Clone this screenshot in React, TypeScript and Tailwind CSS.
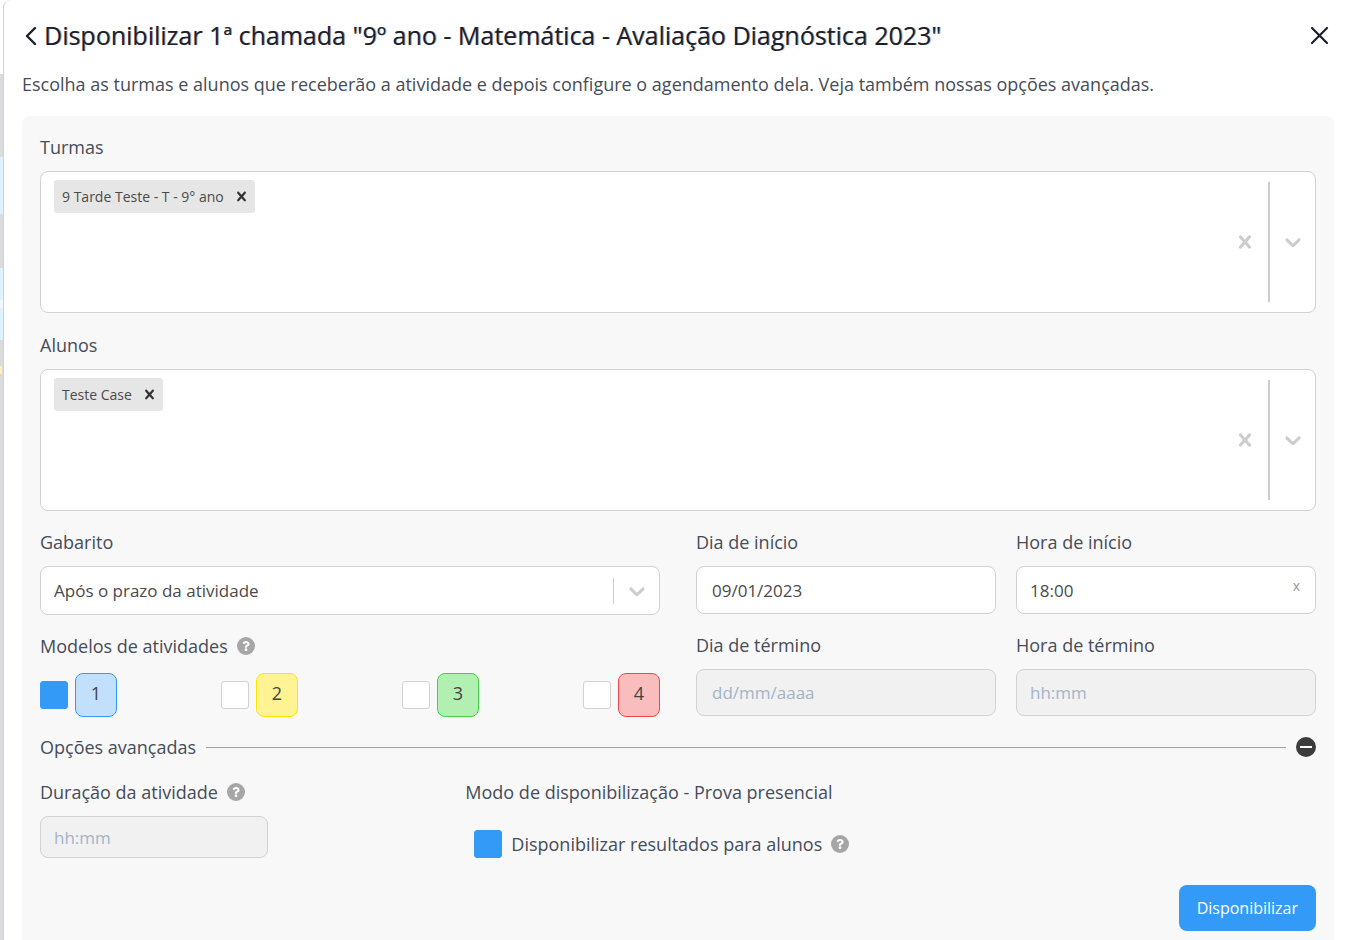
import type { ReactNode } from 'react'
import { FaQuestion } from 'react-icons/fa'

const MODELOS = [
  { id: '1', checked: true, style: 'border-[#339af7] bg-[#c2e0fb]' },
  { id: '2', checked: false, style: 'border-[#ffe500] bg-[#fff394]' },
  { id: '3', checked: false, style: 'border-[#47cf47] bg-[#b2f0b2]' },
  { id: '4', checked: false, style: 'border-[#ec4a4a] bg-[#fabdbd]' },
]

const CROSS =
  'M14.348 14.849c-0.469 0.469-1.229 0.469-1.697 0l-2.651-3.030-2.651 3.029c-0.469 0.469-1.229 0.469-1.697 0-0.469-0.469-0.469-1.229 0-1.697l2.758-3.15-2.759-3.152c-0.469-0.469-0.469-1.228 0-1.697s1.228-0.469 1.697 0l2.652 3.031 2.651-3.031c0.469-0.469 1.228-0.469 1.697 0s0.469 1.229 0 1.697l-2.758 3.152 2.758 3.15c0.469 0.469 0.469 1.229 0 1.698z'
const CHEVRON =
  'M4.516 7.548c0.436-0.446 1.043-0.481 1.576 0l3.908 3.747 3.908-3.747c0.533-0.481 1.141-0.446 1.574 0 0.436 0.445 0.408 1.197 0 1.615-0.406 0.418-4.695 4.502-4.695 4.502-0.217 0.223-0.502 0.335-0.787 0.335s-0.57-0.112-0.789-0.335c0 0-4.287-4.084-4.695-4.502s-0.436-1.17 0-1.615z'

function Glyph({ d, className }: { d: string; className: string }) {
  return (
    <svg viewBox="0 0 20 20" className={className} fill="currentColor">
      <path d={d} />
    </svg>
  )
}

function Help() {
  return (
    <button
      type="button"
      aria-label="Ajuda"
      className="flex size-[18px] shrink-0 items-center justify-center rounded-full bg-[#a6a6a6] text-white"
    >
      <FaQuestion size={10} />
    </button>
  )
}

function Checkbox({ id, checked }: { id: string; checked: boolean }) {
  return (
    <input
      id={id}
      type="checkbox"
      defaultChecked={checked}
      className="size-7 shrink-0 appearance-none rounded-[3px] border border-[#d2d2d2] bg-white checked:border-[#339af7] checked:bg-[#339af7]"
    />
  )
}

function MultiSelect({
  id,
  label,
  value,
}: {
  id: string
  label: string
  value: string
}) {
  return (
    <div>
      <label htmlFor={id} className="block">
        {label}
      </label>
      <div className="mt-[10px] flex h-[142px] rounded-lg border border-[#d2d2d2] bg-white">
        <div className="flex min-w-0 flex-1 items-start pt-2 pl-[13px]">
          <div className="flex h-[33px] items-center rounded-[3px] bg-[#e6e6e6] pr-1 pl-2 text-sm text-[#4a4a4a]">
            {value}
            <button
              type="button"
              aria-label={`Remover ${value}`}
              className="ml-2 text-[#333]"
            >
              <Glyph d={CROSS} className="size-[19px]" />
            </button>
          </div>
          <input id={id} className="h-[33px] min-w-0 flex-1 px-2 outline-none" />
        </div>
        <div className="flex items-center text-[#ccc]">
          <button type="button" aria-label={`Limpar ${label}`} className="px-[10px]">
            <Glyph d={CROSS} className="size-[26px]" />
          </button>
          <span className="h-[120px] w-[2px] bg-[#ccc]" />
          <button type="button" aria-label={`Abrir ${label}`} className="pr-[9px] pl-[10px]">
            <Glyph d={CHEVRON} className="size-[26px]" />
          </button>
        </div>
      </div>
    </div>
  )
}

type TextFieldProps = {
  id: string
  label: string
  value?: string
  placeholder?: string
  disabled?: boolean
  className: string
  children?: ReactNode
}

function TextField({
  id,
  label,
  value,
  placeholder,
  disabled,
  className,
  children,
}: TextFieldProps) {
  return (
    <div>
      <label htmlFor={id} className="block">
        {label}
      </label>
      <div className="relative mt-[10px]">
        <input
          id={id}
          type="text"
          defaultValue={value}
          placeholder={placeholder}
          disabled={disabled}
          className={`block h-12 w-full rounded-lg border border-[#d2d2d2] bg-white text-[17px] text-[#4a4a4a] placeholder:text-[#a3b4c8] disabled:h-[47px] disabled:bg-[#f1f1f1] ${className}`}
        />
        {children}
      </div>
    </div>
  )
}

export default function App() {
  return (
    <div className="flex min-h-screen bg-white font-['Open_Sans',sans-serif] text-lg leading-7 text-[#464c58]">
      {/* slice of the page left visible behind the dialog */}
      <div className="flex w-[3px] shrink-0 flex-col overflow-hidden bg-[#dadbdc]">
        <div className="h-[74px] bg-white" />
        <div className="mt-[83px] h-[57px] bg-[#def1ff]" />
        <div className="mt-[54px] flex h-[72px] items-center bg-[#def1ff]">
          <span className="h-2 w-[3px] bg-white/60" />
        </div>
        <div className="mt-[26px] h-2 w-[2px] self-start bg-[#fdeebb]" />
      </div>

      <main
        role="dialog"
        aria-labelledby="title"
        className="flex min-w-0 flex-1 flex-col rounded-tl-lg border-l border-[#d2d2d2] bg-white pr-4 pl-[18px]"
      >
        <header className="flex items-center pt-[15px] text-[#1a202c]">
          <button type="button" aria-label="Voltar" className="mr-[6px] ml-[2px]">
            <svg
              width="14"
              height="20"
              viewBox="0 0 14 20"
              fill="none"
              stroke="currentColor"
              strokeWidth="2.4"
              strokeLinecap="round"
              strokeLinejoin="round"
            >
              <path d="M11 3 3 11l8 8" />
            </svg>
          </button>
          <h1
            id="title"
            className="flex-1 text-[25px] leading-10 font-medium [text-shadow:1px_0_rgba(26,32,44,0.4)]"
          >
            Disponibilizar 1ª chamada "9º ano - Matemática - Avaliação
            Diagnóstica 2023"
          </h1>
          <button type="button" aria-label="Fechar" className="mr-[5px]">
            <svg
              width="19"
              height="19"
              viewBox="0 0 19 19"
              fill="none"
              stroke="currentColor"
              strokeWidth="2.2"
              strokeLinecap="round"
            >
              <path d="M2 2l15 15M17 2 2 17" />
            </svg>
          </button>
        </header>
        <p className="mt-[15px]">
          Escolha as turmas e alunos que receberão a atividade e depois
          configure o agendamento dela. Veja também nossas opções avançadas.
        </p>

        <form className="mt-[18px] flex-1 rounded-t-lg bg-[#f8f8f8] px-[18px] pt-[17px] pb-[9px]">
          <MultiSelect id="turmas" label="Turmas" value="9 Tarde Teste - T - 9° ano" />
          <div className="mt-[18px]">
            <MultiSelect id="alunos" label="Alunos" value="Teste Case" />
          </div>

          <div className="mt-[17px] grid grid-cols-2 gap-x-9">
            <div>
              <label htmlFor="gabarito" className="block">
                Gabarito
              </label>
              <div className="relative mt-[10px]">
                <select
                  id="gabarito"
                  className="block h-[49px] w-full appearance-none rounded-lg border border-[#d2d2d2] bg-white pr-14 pl-[13px] text-[17px] text-[#4a4a4a]"
                >
                  <option>Após o prazo da atividade</option>
                </select>
                <div className="pointer-events-none absolute inset-y-0 right-0 flex items-center pr-[10px] text-[#ccc]">
                  <span className="mr-[10px] h-[26px] w-px bg-[#ccc]" />
                  <Glyph d={CHEVRON} className="size-[26px]" />
                </div>
              </div>
              <fieldset className="mt-[17px]">
                <legend className="flex items-center gap-[9px]">
                  Modelos de atividades
                  <Help />
                </legend>
                <div className="mt-[13px] flex justify-between">
                  {MODELOS.map((modelo) => (
                    <div key={modelo.id} className="flex items-center gap-[7px]">
                      <Checkbox id={`modelo-${modelo.id}`} checked={modelo.checked} />
                      <label
                        htmlFor={`modelo-${modelo.id}`}
                        className={`flex h-11 w-[42px] items-center justify-center rounded-lg border pb-1 text-[#444] ${modelo.style}`}
                      >
                        {modelo.id}
                      </label>
                    </div>
                  ))}
                </div>
              </fieldset>
            </div>

            <div className="grid grid-cols-2 content-start gap-x-5 gap-y-[17px]">
              <TextField
                id="dia-inicio"
                label="Dia de início"
                value="09/01/2023"
                className="px-[15px]"
              />
              <TextField
                id="hora-inicio"
                label="Hora de início"
                value="18:00"
                className="px-[13px]"
              >
                <button
                  type="button"
                  aria-label="Limpar hora"
                  className="absolute top-2 right-4 text-sm leading-6 text-[#999]"
                >
                  x
                </button>
              </TextField>
              <TextField
                id="dia-termino"
                label="Dia de término"
                placeholder="dd/mm/aaaa"
                disabled
                className="px-[15px]"
              />
              <TextField
                id="hora-termino"
                label="Hora de término"
                placeholder="hh:mm"
                disabled
                className="px-[13px]"
              />
            </div>
          </div>

          <div className="mt-4 flex items-center gap-[10px]">
            <h2>Opções avançadas</h2>
            <span className="h-px flex-1 bg-[#a0a0a0]" />
            <button
              type="button"
              aria-label="Recolher opções avançadas"
              className="flex size-5 items-center justify-center rounded-full bg-[#3c3c3c]"
            >
              <span className="h-[2px] w-3 bg-white" />
            </button>
          </div>

          <div className="mt-[17px] grid grid-cols-3">
            <div>
              <div className="flex items-center gap-[9px]">
                <label htmlFor="duracao">Duração da atividade</label>
                <Help />
              </div>
              <input
                id="duracao"
                type="text"
                placeholder="hh:mm"
                disabled
                className="mt-[10px] block h-[42px] w-[228px] rounded-lg border border-[#d2d2d2] bg-[#f1f1f1] px-[13px] text-[17px] placeholder:text-[#a3b4c8]"
              />
            </div>
            <div className="col-span-2">
              <h3>Modo de disponibilização - Prova presencial</h3>
              <div className="mt-6 flex items-center gap-[9px] pl-[9px]">
                <Checkbox id="resultados" checked />
                <label htmlFor="resultados">
                  Disponibilizar resultados para alunos
                </label>
                <Help />
              </div>
            </div>
          </div>

          <div className="mt-[27px] flex justify-end">
            <button
              type="submit"
              className="h-[46px] rounded-lg bg-[#339af7] px-[18px] text-base text-white"
            >
              Disponibilizar
            </button>
          </div>
        </form>
      </main>
    </div>
  )
}
